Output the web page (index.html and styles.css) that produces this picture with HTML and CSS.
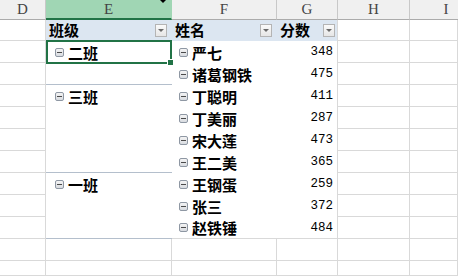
FILE: index.html
```html
<!DOCTYPE html>
<html>
<head>
  <meta charset="utf-8">
  <title>成绩透视表</title>
  <link rel="stylesheet" href="styles.css">
</head>
<body>
  <div class="sheet">
    <!-- column letters -->
    <div class="hd">D</div>
    <div class="hd sel">E<span class="cursor"></span></div>
    <div class="hd">F</div>
    <div class="hd">G</div>
    <div class="hd">H</div>
    <div class="hd edge">I</div>

    <!-- pivot field headers -->
    <div class="c"></div>
    <div class="ph">班级<span class="dd"></span></div>
    <div class="ph">姓名<span class="dd"></span></div>
    <div class="ph last">分数<span class="dd"></span></div>
    <div class="c"></div>
    <div class="c"></div>

    <div class="c"></div>
    <div class="grp active"><span class="fold"></span>二班<span class="pick"></span></div>
    <div class="name"><span class="fold"></span>严七</div>
    <div class="num">348</div>
    <div class="c"></div>
    <div class="c"></div>

    <div class="c"></div>
    <div class="grp end"></div>
    <div class="name"><span class="fold"></span>诸葛钢铁</div>
    <div class="num">475</div>
    <div class="c"></div>
    <div class="c"></div>

    <div class="c"></div>
    <div class="grp"><span class="fold"></span>三班</div>
    <div class="name"><span class="fold"></span>丁聪明</div>
    <div class="num">411</div>
    <div class="c"></div>
    <div class="c"></div>

    <div class="c"></div>
    <div class="grp"></div>
    <div class="name"><span class="fold"></span>丁美丽</div>
    <div class="num">287</div>
    <div class="c"></div>
    <div class="c"></div>

    <div class="c"></div>
    <div class="grp"></div>
    <div class="name"><span class="fold"></span>宋大莲</div>
    <div class="num">473</div>
    <div class="c"></div>
    <div class="c"></div>

    <div class="c"></div>
    <div class="grp end"></div>
    <div class="name"><span class="fold"></span>王二美</div>
    <div class="num">365</div>
    <div class="c"></div>
    <div class="c"></div>

    <div class="c"></div>
    <div class="grp"><span class="fold"></span>一班</div>
    <div class="name"><span class="fold"></span>王钢蛋</div>
    <div class="num">259</div>
    <div class="c"></div>
    <div class="c"></div>

    <div class="c"></div>
    <div class="grp"></div>
    <div class="name"><span class="fold"></span>张三</div>
    <div class="num">372</div>
    <div class="c"></div>
    <div class="c"></div>

    <div class="c"></div>
    <div class="grp end"></div>
    <div class="name end"><span class="fold"></span>赵铁锤</div>
    <div class="num end">484</div>
    <div class="c"></div>
    <div class="c"></div>

    <div class="c"></div><div class="c"></div><div class="c"></div><div class="c"></div><div class="c"></div><div class="c"></div>
    <div class="c"></div><div class="c"></div><div class="c"></div><div class="c"></div><div class="c"></div><div class="c"></div>
  </div>
</body>
</html>
```

FILE: styles.css
```css
body {
  margin: 0;
  background: #fff;
  overflow: hidden;
}

.sheet {
  display: grid;
  grid-template-columns: 46px 126px 105px 61px 72px 1fr;
  grid-template-rows: 20px 21px repeat(10, 22px) 15px;
  font-family: "Noto Sans CJK SC", sans-serif;
  font-size: 15px;
  color: #000;
}

.sheet > div {
  box-sizing: border-box;
  position: relative;
}

/* column letters */
.hd {
  background: #f0f0f0;
  border-right: 1px solid #c8c8c8;
  border-bottom: 1px solid #ababab;
  font-family: "Liberation Serif", serif;
  font-size: 15px;
  color: #444;
  text-align: center;
  line-height: 19px;
}

/* last column is cut by the window edge, keep its letter where the full column would center it */
.hd.edge {
  border-right: none;
  padding-left: 24px;
}

.hd.sel {
  background: #a0d6b4;
  border-bottom: 2px solid #217346;
  border-right-color: #a0d6b4;
}

.cursor {
  position: absolute;
  right: 5px;
  top: 0;
  border-left: 3px solid transparent;
  border-right: 3px solid transparent;
  border-top: 3px solid #000;
}

/* plain cells */
.c {
  border-right: 1px solid #d9d9d9;
  border-bottom: 1px solid #d9d9d9;
}

/* pivot header */
.ph {
  background: #dce6f1;
  font-weight: 700;
  line-height: 20px;
  padding-left: 3px;
}

.ph.last {
  border-right: 1px solid #d9d9d9;
}

.dd {
  position: absolute;
  right: 5px;
  top: 4px;
  width: 12px;
  height: 13px;
  box-sizing: border-box;
  border: 1px solid #b4b4b4;
  background: linear-gradient(#fafafa, #e6e6e6);
}

.ph.last .dd {
  right: 2px;
}

.dd::after {
  content: "";
  position: absolute;
  left: 2px;
  top: 4px;
  border-left: 3px solid transparent;
  border-right: 3px solid transparent;
  border-top: 3px solid #6a6a6a;
}

/* row labels */
.grp,
.name {
  font-weight: 700;
  line-height: 21px;
  display: flex;
  align-items: center;
  gap: 4px;
}

.grp {
  padding-left: 9px;
}

.grp.end {
  border-bottom: 1px solid #b4bfcc;
}

.name {
  padding-left: 7px;
}

.name.end,
.num.end {
  border-bottom: 1px solid #d9d9d9;
}

.fold {
  display: inline-block;
  width: 9px;
  height: 9px;
  box-sizing: border-box;
  border: 1px solid #8e97a3;
  border-radius: 2px;
  background: linear-gradient(#f4f4f4, #d8dbe0);
  position: relative;
  flex: none;
}

.fold::after {
  content: "";
  position: absolute;
  left: 1px;
  right: 1px;
  top: 3px;
  height: 1px;
  background: #4a4a4a;
}

.num {
  font-family: "Liberation Mono", monospace;
  font-size: 12.5px;
  text-align: right;
  padding-right: 4px;
  line-height: 22px;
  border-right: 1px solid #d9d9d9;
}

/* active cell frame */
.pick {
  position: absolute;
  left: 0;
  top: -1px;
  right: 0;
  bottom: -1px;
  border: 2px solid #217346;
}

.pick::after {
  content: "";
  position: absolute;
  right: -4px;
  bottom: -4px;
  width: 5px;
  height: 5px;
  background: #217346;
  border: 1px solid #fff;
}
```
